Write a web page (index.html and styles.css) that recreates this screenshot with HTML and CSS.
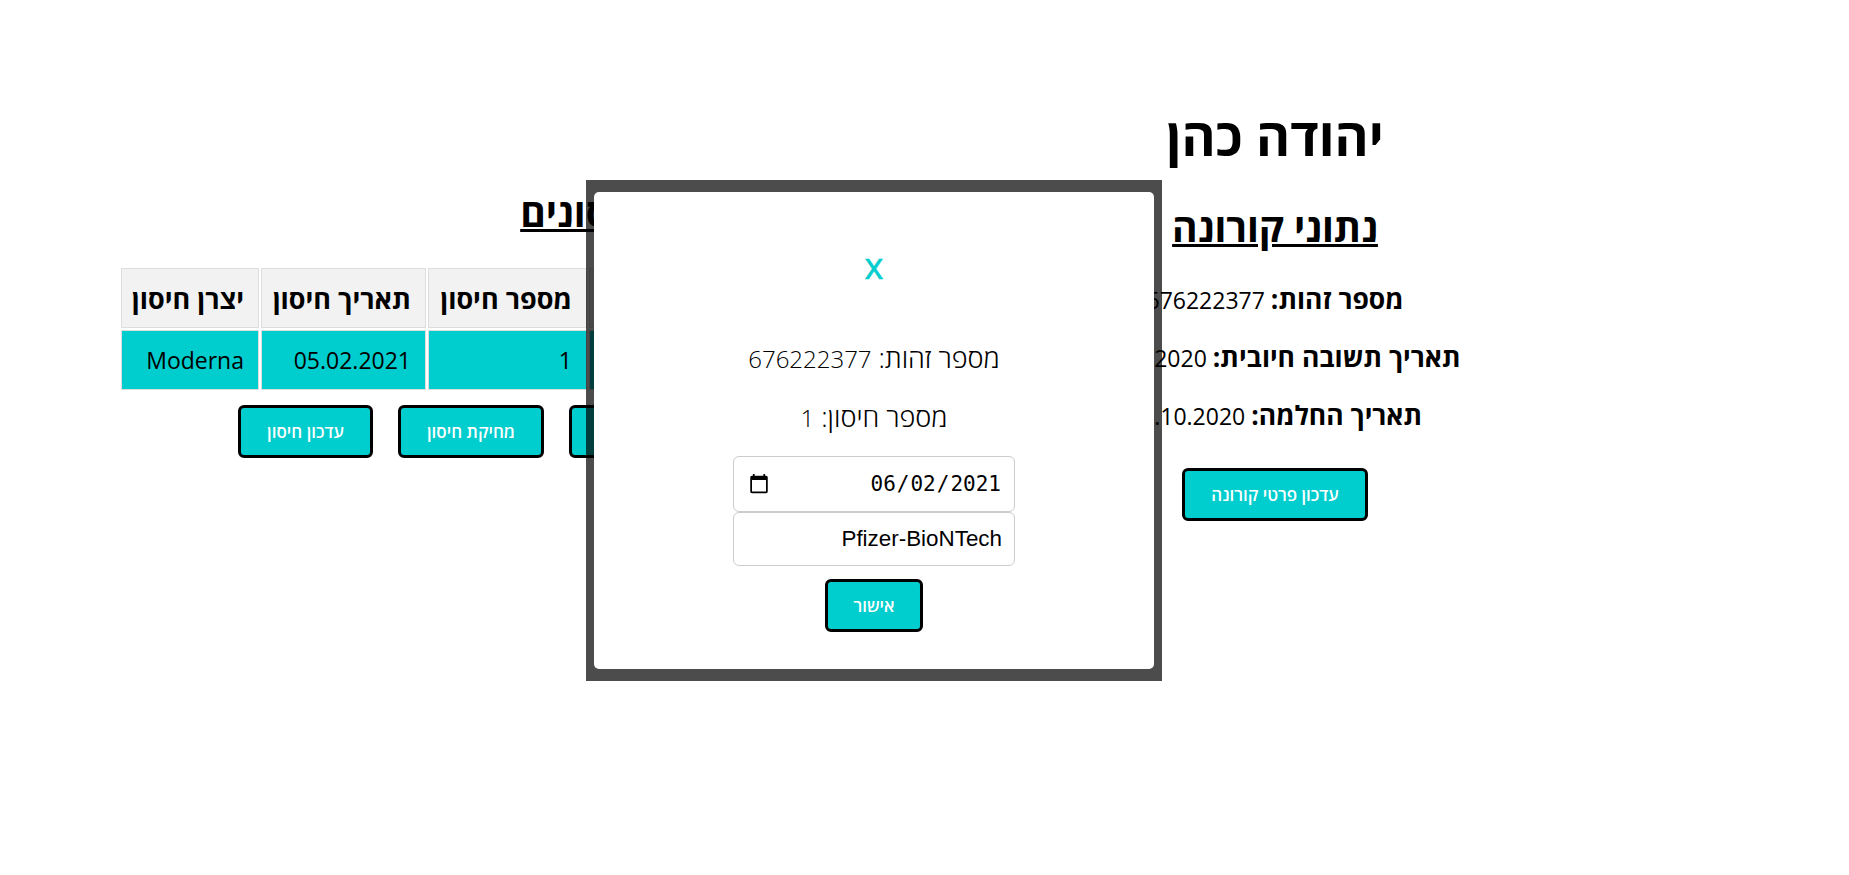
FILE: index.html
```html
<!DOCTYPE html>
<html lang="he" dir="rtl">
<head>
  <meta charset="UTF-8">
  <title>יהודה כהן</title>
  <link rel="stylesheet" href="styles.css">
</head>
<body>

  <div class="page">
    <section class="col col-corona">
      <h1 class="name">יהודה כהן</h1>
      <h2 class="title">נתוני קורונה</h2>
      <p class="line"><b>מספר זהות:</b> 676222377</p>
      <p class="line"><b>תאריך תשובה חיובית:</b> 01.10.2020</p>
      <p class="line"><b>תאריך החלמה:</b> 15.10.2020</p>
      <button class="btn btn-corona">עדכון פרטי קורונה</button>
    </section>

    <section class="col col-vaccine">
      <h2 class="title title-vaccine">נתוני חיסונים</h2>
      <table class="vaccines">
        <tr>
          <th class="cell-id"></th>
          <th class="cell-num">מספר חיסון</th>
          <th class="cell-date">תאריך חיסון</th>
          <th class="cell-maker">יצרן חיסון</th>
        </tr>
        <tr>
          <td></td>
          <td>1</td>
          <td>05.02.2021</td>
          <td>Moderna</td>
        </tr>
      </table>
      <div class="actions">
        <button class="btn btn-add">הוספת חיסון</button>
        <button class="btn btn-del">מחיקת חיסון</button>
        <button class="btn btn-edit">עדכון חיסון</button>
      </div>
    </section>
  </div>

  <!-- חלון עדכון חיסון -->
  <div class="modal">
    <div class="modal-content">
      <div class="close">x</div>
      <p class="modal-line">מספר זהות: <span class="num">676222377</span></p>
      <p class="modal-line">מספר חיסון: <span class="num">1</span></p>
      <input class="field field-date" type="date" value="2021-06-02">
      <input class="field field-text" type="text" value="Pfizer-BioNTech">
      <button class="btn btn-ok">אישור</button>
    </div>
  </div>

</body>
</html>
```

FILE: styles.css
```css
* {
  box-sizing: border-box;
}

html, body {
  height: 100%;
  overflow: hidden;
}

body {
  margin: 0;
  font-family: "Open Sans", "Liberation Sans", sans-serif;
  color: #000;
  background: #fff;
}

.page {
  display: flex;
  padding-right: 387px;
  padding-top: 108px;
}

.col {
  display: flex;
  flex-direction: column;
  align-items: center;
}

.col-corona {
  width: 374px;
  flex: none;
}

.col-vaccine {
  width: 969px;
  flex: none;
  padding-top: 80px;
}

.name {
  margin: 0 0 39px;
  font-size: 52px;
  line-height: 56px;
  font-weight: 700;
}

.title {
  margin: 0;
  font-size: 39px;
  line-height: 48px;
  font-weight: 700;
  text-decoration: underline;
}

.title-vaccine {
  margin-left: 54px;
}

.line {
  margin: 36px 0 0;
  font-size: 23px;
  line-height: 25px;
  white-space: nowrap;
  height: 25px;
}

.line + .line {
  margin-top: 33px;
}

.line b {
  font-size: 26.5px;
}

.btn {
  height: 53px;
  border: 3px solid #000;
  border-radius: 6px;
  background: #00cdcd;
  color: #fff;
  font-family: "Open Sans", "Liberation Sans", sans-serif;
  font-size: 17px;
  font-weight: 600;
  padding: 0;
}

.btn-corona {
  width: 186px;
  margin-top: 40px;
}

.vaccines {
  width: 100%;
  table-layout: fixed;
  margin-top: 30px;
  border-spacing: 2px;
  border-collapse: separate;
  font-size: 23px;
}

.vaccines th,
.vaccines td {
  height: 60px;
  padding: 0 14px;
  text-align: right;
  border: 1px solid #ddd;
  white-space: nowrap;
}

.vaccines th {
  background: #f2f2f2;
  font-size: 27px;
  font-weight: 700;
}

.vaccines td {
  background: #00cdcd;
}

.cell-num {
  width: 159px;
}

.cell-date {
  width: 165px;
}

.cell-maker {
  width: 138px;
}

.actions {
  display: flex;
  gap: 25px;
  margin-top: 13px;
  padding-left: 119px;
  align-self: flex-end;
}

.btn-add {
  width: 146px;
}

.btn-del {
  width: 146px;
}

.btn-edit {
  width: 135px;
}

/* overlay */
.modal {
  position: fixed;
  top: 180px;
  left: 586px;
  width: 576px;
  height: 501px;
  padding: 12px 8px;
  background: rgba(0, 0, 0, 0.7);
}

.modal-content {
  height: 100%;
  display: flex;
  flex-direction: column;
  align-items: center;
  background: #fff;
  border-radius: 5px;
  padding-top: 52px;
}

.close {
  color: #00cdcd;
  font-size: 36px;
  line-height: 44px;
  -webkit-text-stroke: 0.5px #00cdcd;
}

.modal-line {
  margin: 54px 0 0;
  font-size: 27px;
  line-height: 32px;
  height: 32px;
  font-weight: 300;
  color: #000;
}

.modal-line + .modal-line {
  margin-top: 27px;
}

.num {
  font-size: 24px;
}

.field {
  width: 282px;
  border: 1px solid #ccc;
  border-radius: 6px;
  padding: 0 12px;
  color: #000;
  background: #fff;
  text-align: right;
}

.field-date {
  height: 56px;
  margin-top: 23px;
  font-family: "DejaVu Sans Mono", monospace;
  font-size: 21px;
}

.field-date::-webkit-calendar-picker-indicator {
  order: -1;
  margin: 0 auto 0 0;
  width: 22px;
  height: 22px;
}

.field-text {
  height: 54px;
  font-family: "Liberation Sans", sans-serif;
  font-size: 22.4px;
}

.btn-ok {
  width: 98px;
  margin-top: 13px;
}
```
